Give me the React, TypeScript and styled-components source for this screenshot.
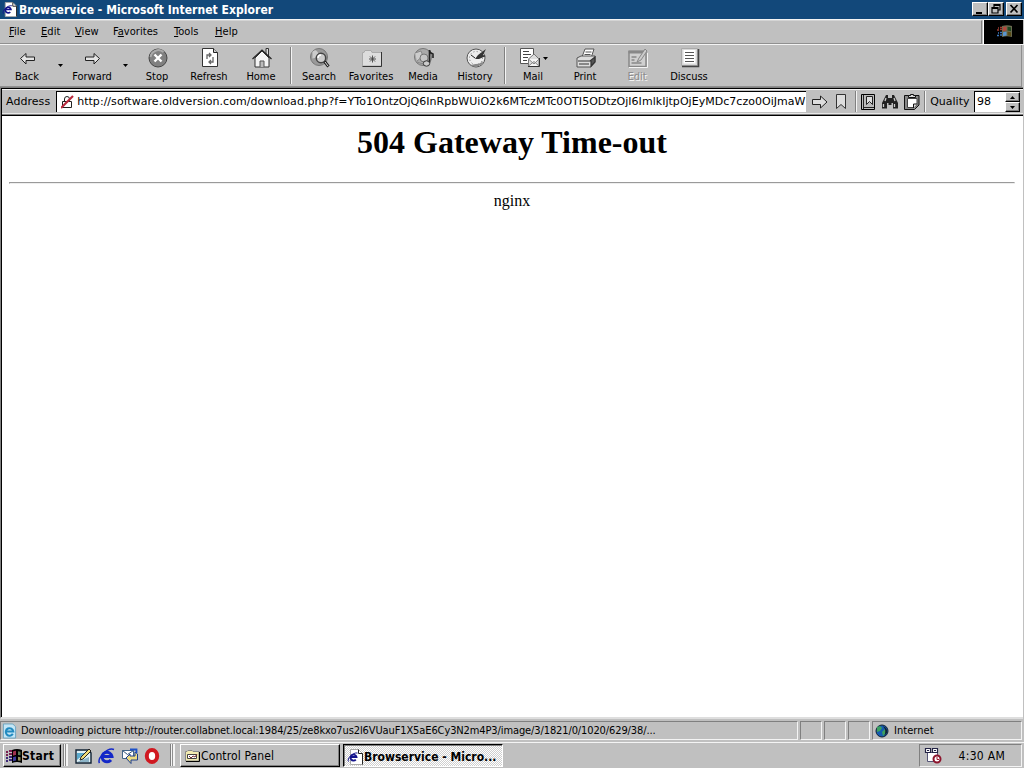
import React from 'react';
import styled, { createGlobalStyle, css } from 'styled-components';

const ui = '"DejaVu Sans Condensed", "DejaVu Sans", sans-serif';

const GlobalStyle = createGlobalStyle`
  * {
    box-sizing: border-box;
  }

  body {
    margin: 0;
    background: #c0c0c0;
    overflow: hidden;
  }
`;

const raised = css`
  border: 1px solid;
  border-color: #fff #000 #000 #fff;
  box-shadow: inset -1px -1px 0 #808080;
`;

const sunken = css`
  border: 1px solid;
  border-color: #808080 #f4f4f4 #f4f4f4 #808080;
`;

const Desktop = styled.div`
  width: 1024px;
  height: 768px;
  display: flex;
  flex-direction: column;
  background: #c0c0c0;
  color: #000;
  font: 11px/14px ${ui};
  white-space: nowrap;
  overflow: hidden;

  svg {
    display: block;
    flex: none;
  }
`;

const Text = styled.span<{ $spacing?: number }>`
  letter-spacing: ${({ $spacing = 0 }) => $spacing}px;
`;

const TitleBar = styled.div`
  flex: none;
  height: 19px;
  padding: 0 2px 0 2px;
  display: flex;
  align-items: center;
  background: #12487a;
  color: #fff;
  font-size: 12px;
  font-weight: bold;

  ${Text} {
    flex: 1;
    padding-left: 2px;
  }
`;

const CaptionButton = styled.div<{ $gap?: number }>`
  ${raised}
  width: 16px;
  height: 14px;
  margin-left: ${({ $gap = 0 }) => $gap}px;
  margin-bottom: 1px;
  background: #c0c0c0;
`;

const MenuRow = styled.div`
  flex: none;
  height: 26px;
  display: flex;
  border-top: 1px solid #f4f4f4;
  border-bottom: 1px solid #f4f4f4;
`;

const MenuBar = styled.div`
  flex: 1;
  display: flex;
  align-items: center;
  padding: 0 0 1px 9px;
  margin-right: 1px;
  border-right: 1px solid #808080;
  border-bottom: 1px solid #909090;
  border-top: 1px solid #d4d4d4;
`;

const MenuItem = styled.div<{ $width: number }>`
  width: ${({ $width }) => $width}px;
  letter-spacing: 0.05px;

  u {
    text-underline-offset: 1px;
  }
`;

const Throbber = styled.div`
  width: 40px;
  margin: 0 1px 0 0;
  background: #000;
  border-left: 1px solid #fff;
  display: flex;
  align-items: center;
  justify-content: center;
`;

const ToolBar = styled.div`
  flex: none;
  height: 42px;
  margin-right: 2px;
  padding: 0 0 0 1px;
  display: flex;
  border-right: 1px solid #909090;
  border-bottom: 1px solid #909090;
`;

const Tool = styled.div<{ $disabled?: boolean }>`
  width: 52px;
  padding-top: 3px;
  display: flex;
  flex-direction: column;
  align-items: center;
  color: ${({ $disabled }) => ($disabled ? '#8c8c8c' : '#000')};
  text-shadow: ${({ $disabled }) => ($disabled ? '1px 1px 0 #f4f4f4' : 'none')};

  ${Text} {
    margin-top: 2px;
  }
`;

const Arrow = styled.div`
  width: 13px;
  padding: 19px 0 0 5px;
`;

const MailIcons = styled.div`
  display: flex;
  gap: 3px;
  align-items: center;
  width: 28px;
`;

const ToolSeparator = styled.div`
  width: 2px;
  margin: 2px 1px 2px 3px;
  border-left: 1px solid #808080;
  border-right: 1px solid #f4f4f4;
`;

const Page = styled.div`
  flex: none;
  height: 632px;
  margin: 0 1px 0 0;
  border-left: 1px solid #808080;
  border-top: 1px solid #808080;
  border-bottom: 2px solid #dedede;
  display: flex;
  flex-direction: column;
  background: #fff;
`;

const AddressBar = styled.div`
  height: 28px;
  display: flex;
  align-items: center;
  padding: 0 3px 1px 4px;
  background: #c0c0c0;
  border: 1px solid #000;
  border-right-width: 0;
  box-shadow: inset 0 -2px 0 -1px #808080, inset 0 1px 0 #f4f4f4, inset 0 -2px 0 #e8e8e8;
  font-family: "DejaVu Sans", sans-serif;
`;

const UrlField = styled.div`
  width: 750px;
  height: 21px;
  margin-left: 6px;
  padding-left: 4px;
  display: flex;
  align-items: center;
  background: #fff;
  border-left: 1px solid #000;
  border-top: 1px solid #000;
  overflow: hidden;

  ${Text} {
    padding-left: 2px;
  }
`;

const BarIcons = styled.div`
  flex: 1;
  display: flex;
  align-items: center;
  padding-left: 6px;
`;

const BarSeparator = styled.div<{ $left: number; $right: number }>`
  width: 2px;
  height: 21px;
  margin: 0 ${({ $right }) => $right}px 0 ${({ $left }) => $left}px;
  border-left: 1px solid #808080;
  border-right: 1px solid #f4f4f4;
`;

const Quality = styled.div`
  width: 46px;
  height: 21px;
  display: flex;
  align-items: center;
  background: #fff;
  border-left: 1px solid #000;
  border-top: 1px solid #000;
  padding-left: 2px;
`;

const Spinner = styled.div`
  width: 15px;
  height: 20px;
  margin-left: auto;
  display: flex;
  flex-direction: column;
`;

const SpinButton = styled.div`
  flex: 1;
  ${raised}
  background: #c0c0c0;
  display: flex;
  align-items: center;
  justify-content: center;
`;

const Document = styled.div`
  flex: 1;
  padding: 8px 8px 8px 7px;
  border-left: 1px solid #000;
  color: #000;
  font-family: "Liberation Serif", serif;
  font-size: 16px;
  line-height: 18px;
  text-align: center;

  h1 {
    margin: 0 0 21px;
    font-size: 32px;
    line-height: 37px;
  }

  hr {
    margin: 0 0 8px;
  }
`;

const StatusBar = styled.div`
  flex: none;
  height: 23px;
  padding: 2px 2px 2px 0;
  display: flex;
  gap: 2px;
`;

const StatusPane = styled.div<{ $width?: number }>`
  ${sunken}
  ${({ $width }) => ($width ? `width: ${$width}px` : 'flex: 1')};
  display: flex;
  align-items: center;
  padding-top: 1px;

  svg {
    margin: 0 4px 0 1px;
  }
`;

const TaskBar = styled.div`
  flex: 1;
  padding: 1px 2px 0 3px;
  display: flex;
  border-top: 1px solid #f4f4f4;
`;

const StartButton = styled.div`
  ${raised}
  width: 58px;
  height: 23px;
  padding-left: 2px;
  display: flex;
  align-items: center;
  font-weight: bold;
  font-size: 12px;
`;

const Grip = styled.div<{ $left: number; $right: number }>`
  width: 5px;
  height: 22px;
  margin: 0 ${({ $right }) => $right}px 0 ${({ $left }) => $left}px;
  border-left: 1px solid #808080;
  border-right: 2px solid #f4f4f4;
  box-shadow: inset 1px 0 0 #f4f4f4, inset -1px 0 0 #909090;
`;

const QuickLaunch = styled.div`
  width: 85px;
  display: flex;
  align-items: center;
  justify-content: space-between;
`;

const TaskButton = styled.div<{ $active?: boolean }>`
  ${raised}
  width: 160px;
  height: 23px;
  padding-left: 3px;
  margin-right: 3px;
  display: flex;
  align-items: center;
  font-size: 12px;

  ${Text} {
    padding-left: 1px;
  }

  ${({ $active }) => $active && css`
    border-color: #000 #fff #fff #000;
    box-shadow: inset 1px 1px 0 #808080;
    background: repeating-conic-gradient(#fff 0 25%, #cfcfcf 0 50%) 0 0 / 2px 2px;
    font-weight: bold;
    padding-top: 2px;
  `}
`;

const Tray = styled.div`
  ${sunken}
  width: 103px;
  height: 23px;
  margin-left: auto;
  padding: 0 16px 0 4px;
  display: flex;
  align-items: center;
  justify-content: space-between;
  font-size: 12px;
`;

const ArrowDown = () => (
  <svg width="5" height="3" viewBox="0 0 5 3"><path d="M0 0h5L2.5 3z" /></svg>
);

const ExplorerPage = ({ size = 16 }: { size?: number }) => (
  <svg width={size} height={size} viewBox="0 0 16 16">
    <path d="M3.5.5h8l4 4v11h-12z" fill="#fff" stroke="#aaa" />
    <path d="M11.5.5v4h4v11" fill="none" stroke="#222" />
    <path d="M8.8 10.600a3 3 0 1 1 .7-2.600H4" fill="none" stroke="#14148c" strokeWidth="1.800" />
    <path d="M1.500 12.500C-.5 10 6 3 10.500 4" fill="none" stroke="#14148c" />
  </svg>
);

const Flag = ({ width = 16 }: { width?: number }) => (
  <svg width={width} height="16" viewBox="0 0 16 16">
    <path d="M6 2q5-2 10 0v13q-5-2-10 0z" fill="#000" />
    <path d="M7 3.500q2-.9 3-.8v4.400q-1.500-.1-3 .7z" fill="#a03250" />
    <path d="M12 3.200q1 0 2.500.5v3.600q-1-.4-2.500-.4z" fill="#5a7d5a" />
    <path d="M7 9.200q2-.9 3-.8v4.200q-1.500 0-3 .7z" fill="#3c3ca0" />
    <path d="M12 8.700q1 0 2.500.5v3.600q-1-.4-2.500-.4z" fill="#96915a" />
    <path d="M0 4h2m1-1h3M0 7h2m1-1h3" stroke="#7a2050" strokeWidth="1.900" />
    <path d="M0 10h2m1-1h3M0 13h2m1-1h3" stroke="#3c2878" strokeWidth="1.900" />
  </svg>
);

// the dimmed flag in the corner of the menu row
const ThrobberFlag = () => (
  <svg width="18" height="16" viewBox="0 0 18 16">
    <path d="M7 2q5-1.500 10 0v11q-5-1.500-10 0z" fill="#6a6a50" />
    <path d="M8 3.200q2-.7 3.500-.6v3.900q-1.700 0-3.500.7z" fill="#b4463c" />
    <path d="M12.500 2.700q2 0 3.500.6v3.900q-1.700-.6-3.500-.6z" fill="#1e4620" />
    <path d="M8 8.300q2-.7 3.500-.6v3.900q-1.700 0-3.500.7z" fill="#5a96d2" />
    <path d="M12.500 7.700q2 0 3.500.6v3.900q-1.700-.6-3.500-.6z" fill="#5a4b14" />
    <path d="M3 4h1m1-.5h2M2 6h2m1-.5h2" stroke="#a03c32" strokeWidth="1.700" />
    <path d="M3 9h1m1-.5h2M2 11.500h2m1-.5h2" stroke="#3c78be" strokeWidth="1.700" />
  </svg>
);

const toolIcons: Record<string, React.ReactNode> = {
  Back: <path d="M3.5 10.500l5.500-5v3.500h8.500v3.500H9v3.500z" fill="#e4e4e4" stroke="#222" />,
  Forward: <path d="M17.500 10.500l-5.500-5v3.500H3.500v3.500H12v3.500z" fill="#e4e4e4" stroke="#222" />,
  Stop: <>
    <circle cx="11" cy="10" r="9" fill="#808080" stroke="#444" />
    <path d="M3.500 9a8 8 0 0 1 13-5" stroke="#aaa" strokeWidth="2" fill="none" />
    <path d="M7.500 6.500l7 7m0-7l-7 7" stroke="#fff" strokeWidth="2.400" />
  </>,
  Refresh: <>
    <path d="M3.500.500h11l4 4v14h-15z" fill="#fff" stroke="#333" />
    <path d="M14.500.500v4h4" fill="#ccc" stroke="#222" />
    <path d="M8 11V7h4m-2-2l2 2-2 2M14 9v5h-4m2-2l-2 2 2 2" fill="none" stroke="#666" strokeWidth="1.300" />
  </>,
  Home: <>
    <path d="M15 7V.500h2.500V9" fill="#ddd" stroke="#333" />
    <path d="M4 10v9h14v-9l-7-7z" fill="#f4f4f4" stroke="#333" />
    <path d="M1.500 11L11 2l9.500 9" fill="none" stroke="#222" strokeWidth="1.200" />
    <path d="M9 19v-6h4v6" fill="#bbb" stroke="#555" />
  </>,
  Search: <>
    <circle cx="10" cy="9" r="8.500" fill="#999" stroke="#777" />
    <path d="M3.500 4q4-3 5 1t-5 5m8 4q1-3 5-5" fill="#ccc" stroke="#ccc" />
    <circle cx="12" cy="10" r="4.700" fill="#ccc" stroke="#444" strokeWidth="1.500" />
    <path d="M9 10a3 3 0 0 1 3-3" fill="none" stroke="#fff" strokeWidth="1.500" />
    <path d="M15.500 13.500l4 5" stroke="#222" strokeWidth="3" />
    <path d="M16 14l3 4" stroke="#ddd" />
  </>,
  Favorites: <>
    <path d="M1.500 18V4.500H3l1-2h6l1 2h9.500V18z" fill="#ddd" stroke="#aaa" />
    <path d="M1.500 18.500h19V4" fill="none" stroke="#333" />
    <path d="M11.500 7.500v7M8 11h7m-6-2.500l5 5m0-5l-5 5" stroke="#444" strokeWidth=".9" />
  </>,
  Media: <>
    <circle cx="10" cy="9" r="8.500" fill="#aaa" stroke="#777" />
    <path d="M2 5l6-2 2 5-6 5M4 14l6 2" fill="#ccc" stroke="#888" />
    <circle cx="11" cy="10" r="4" fill="#c6c6c6" stroke="#777" />
    <path d="M16.500 15V2q0 3 3.500 4v4" fill="none" stroke="#222" strokeWidth="1.600" />
    <ellipse cx="13.500" cy="15.500" rx="3.200" ry="2.700" fill="#ccc" stroke="#333" />
  </>,
  History: <>
    <circle cx="11" cy="10" r="9" fill="#eee" stroke="#555" />
    <circle cx="11" cy="10" r="6.500" fill="none" stroke="#777" strokeDasharray="1 2.400" />
    <path d="M5 17q6 4 12-1l2-4q-3 4-8 4" fill="#888" />
    <path d="M10 11l3-4 8-6-3 6 3 1-7 3z" fill="#333" />
    <path d="M10 10L6 7" stroke="#222" />
  </>,
  Mail: <>
    <path d="M1.500.500h13v15h-13z" fill="#fff" stroke="#555" />
    <path d="M4 3.500h6M4 6.500h8M4 9.500h5M4 12.500h4" stroke="#444" />
    <path d="M9.500 11l5.500-5 5 5v7H9.500z" fill="#ddd" stroke="#777" />
    <path d="M9.500 18l5.500-4.500 5 4.500m-10.500-7l5.500 5 5-5" fill="#f5f5f5" stroke="#888" />
    <path d="M9 18.500h11.500V10" fill="none" stroke="#333" />
  </>,
  Print: <>
    <path d="M7 9l3-8h9l-3 9" fill="#fff" stroke="#555" />
    <path d="M10.500 4h6m-7 2.500h6" stroke="#555" />
    <path d="M2 10l4-2h14v6l-4 5H2z" fill="#ddd" stroke="#555" />
    <path d="M3 13h12l5-4v5l-4 4V13M4 16h10" fill="#555" stroke="#333" strokeWidth="1.200" />
  </>,
  Edit: <>
    <path d="M2 3.500h17v15H2z" fill="#d0d0d0" stroke="#888" strokeWidth="1.500" />
    <path d="M1.500 4h17.500" stroke="#888" strokeWidth="3" />
    <path d="M4.500 9h5m-5 3h3m-3 3h10" stroke="#888" strokeWidth="1.400" />
    <path d="M10 14l2-4 6-9 2 2-6 9z" fill="#ccc" stroke="#888" />
    <path d="M20.500 5v14.500H2" fill="none" stroke="#f4f4f4" />
  </>,
  Discuss: <>
    <path d="M2.500.500h16v17h-16z" fill="#d8d8d8" stroke="#aaa" />
    <path d="M4.500 2h12v13.500h-12z" fill="#fff" />
    <path d="M19.500 1v17.500H3" fill="none" stroke="#444" strokeWidth="1.600" />
    <path d="M6 4.500h9M6 7.500h9M6 10.500h9M6 13.500h9" stroke="#555" />
  </>
};

type ToolButtonProps = {
  name: string;
};

const ToolButton = ({ name }: ToolButtonProps) => {
  const icon = (
    <svg width="21" height="20" viewBox="0 0 21 20">{toolIcons[name]}</svg>
  );

  return (
    <Tool $disabled={name === 'Edit'}>
      {name === 'Mail' ? <MailIcons>{icon}<ArrowDown /></MailIcons> : icon}
      <Text>{name}</Text>
    </Tool>
  );
};

const url = 'http://software.oldversion.com/download.php?f=YTo1OntzOjQ6InRpbWUiO2k6MTczMTc0OTI5ODtzOjI6ImlkIjtpOjEyMDc7czo0OiJmaW';

const menus: [string, string, string, number][] = [
  ['', 'F', 'ile', 32],
  ['', 'E', 'dit', 34],
  ['', 'V', 'iew', 38],
  ['F', 'a', 'vorites', 61],
  ['', 'T', 'ools', 41],
  ['', 'H', 'elp', 40]
];

const App = () => (
  <Desktop>
    <GlobalStyle />
    <TitleBar>
      <ExplorerPage size={15} />
      <Text $spacing={0.05}>Browservice - Microsoft Internet Explorer</Text>
      <CaptionButton><svg width="14" height="12"><path d="M3 9h6v2H3z" /></svg></CaptionButton>
      <CaptionButton>
        <svg width="14" height="12">
          <path d="M5 4V1.500h6V7H9M5 2.500h6M3 4.500h6V10H3zm0 1h6" fill="none" stroke="#000" strokeWidth="1.200" />
        </svg>
      </CaptionButton>
      <CaptionButton $gap={2}>
        <svg width="14" height="12"><path d="M3.500 2l7 7.500m0-7.500l-7 7.500" stroke="#000" strokeWidth="1.700" /></svg>
      </CaptionButton>
    </TitleBar>
    <MenuRow>
      <MenuBar>
        {menus.map(([before, key, after, width]) => (
          <MenuItem $width={width} key={key}>{before}<u>{key}</u>{after}</MenuItem>
        ))}
      </MenuBar>
      <Throbber><ThrobberFlag /></Throbber>
    </MenuRow>
    <ToolBar>
      <ToolButton name="Back" />
      <Arrow><ArrowDown /></Arrow>
      <ToolButton name="Forward" />
      <Arrow><ArrowDown /></Arrow>
      {['Stop', 'Refresh', 'Home'].map((name) => <ToolButton key={name} name={name} />)}
      <ToolSeparator />
      {['Search', 'Favorites', 'Media', 'History'].map((name) => <ToolButton key={name} name={name} />)}
      <ToolSeparator />
      {['Mail', 'Print', 'Edit', 'Discuss'].map((name) => <ToolButton key={name} name={name} />)}
    </ToolBar>
    <Page>
      <AddressBar>
        <Text $spacing={0.05}>Address</Text>
        <UrlField>
          <svg width="14" height="14" viewBox="0 0 14 14">
            <path d="M1.500 6.500h9v6h-9zM3.500 6V4a2.500 2.500 0 0 1 5 0v2" fill="none" stroke="#222" />
            <path d="M0 13L12 1" stroke="#b8283c" strokeWidth="2.200" />
          </svg>
          <Text $spacing={0.035}>{url}</Text>
        </UrlField>
        <BarIcons>
          <svg width="16" height="16" viewBox="0 0 16 16">
            <path d="M.5 5.500h8v-3.500l6.500 6-6.500 6v-3.500h-8z" fill="#ddd" stroke="#222" />
          </svg>
          <svg width="27" height="16" viewBox="0 0 27 16">
            <path d="M8.500.5h9v14l-4.500-4-4.500 4z" fill="#ddd" stroke="#333" />
          </svg>
          <BarSeparator $left={0} $right={4} />
          <svg width="14" height="16" viewBox="0 0 14 16">
            <path d="M.5.5h13v15H.5z" fill="#bbb" stroke="#000" />
            <path d="M2.500 1v14M5.500 2.500h6v8l-3-3-3 3zM3 13.500h10" fill="#ddd" stroke="#222" />
          </svg>
          <svg width="29" height="16" viewBox="0 0 29 16">
            <path d="M9 5l2-4h2v3h4V1h2l2 4 2 4v5.500h-5V9h-1.500v2h-3V9H12v5.500H7V9z" fill="#222" />
            <path d="M8.500 10v3m11-3v3M11 4l-1 3m9-3l1 3" stroke="#ccc" strokeWidth="1.300" />
          </svg>
          <svg width="16" height="16" viewBox="0 0 16 16">
            <path d="M.5 1.500h14.500v9.500l-4.500 4.500H.5z" fill="#888" stroke="#111" />
            <path d="M3.500 4.500H13v6l-3 3H3.500z" fill="#fff" stroke="#444" />
            <path d="M4.500 3.500v-2h2v-1h3v1h2v2zM9.500 14v-4H13" fill="#ddd" stroke="#111" />
          </svg>
          <BarSeparator $left={4} $right={4} />
          <Text>Quality</Text>
        </BarIcons>
        <Quality>
          <Text>98</Text>
          <Spinner>
            <SpinButton><svg width="5" height="3"><path d="M0 3h5L2.500 0z" /></svg></SpinButton>
            <SpinButton><ArrowDown /></SpinButton>
          </Spinner>
        </Quality>
      </AddressBar>
      <Document>
        <h1>504 Gateway Time-out</h1>
        <hr />
        nginx
      </Document>
    </Page>
    <StatusBar>
      <StatusPane>
        <svg width="15" height="16" viewBox="0 0 16 16">
          <path d="M1.500.5h10l3 3v12h-13z" fill="#c4e6f6" stroke="#6aa3c0" />
          <path d="M11.500 11a4 4 0 1 1 .5-2.500H5" fill="none" stroke="#218ac0" strokeWidth="2.200" />
        </svg>
        <Text $spacing={-0.11}>Downloading picture http://router.collabnet.local:1984/25/ze8kxo7us2l6VUauF1X5aE6Cy3N2m4P3/image/3/1821/0/1020/629/38/...</Text>
      </StatusPane>
      <StatusPane $width={22} />
      <StatusPane $width={22} />
      <StatusPane $width={22} />
      <StatusPane $width={150}>
        <svg width="16" height="16" viewBox="0 0 16 16">
          <circle cx="8" cy="8" r="6" fill="#155bb0" stroke="#123" />
          <path d="M3 4q4-2 5 1L6 8 3 9zM8 9l4-4v5l-3 3z" fill="#3aa060" />
          <path d="M9 3q5 2 4 7l-3 3q3-5-1-10" fill="#123" />
        </svg>
        <Text $spacing={0.05}>Internet</Text>
      </StatusPane>
    </StatusBar>
    <TaskBar>
      <StartButton><Flag /><Text $spacing={0.3}>Start</Text></StartButton>
      <Grip $left={2} $right={7} />
      <QuickLaunch>
        <svg width="17" height="16" viewBox="0 0 17 16">
          <path d="M1 2h13l2 3v10H1z" fill="#e0f0f6" stroke="#123" strokeWidth="1.400" />
          <path d="M2 12V5h8z" fill="#5aaacd" />
          <path d="M2 14h12V9z" fill="#8cb4c8" />
          <path d="M5 12l1-3 8-8 2 2-8 8z" fill="#f0dc78" stroke="#222" />
        </svg>
        <svg width="17" height="16" viewBox="0 0 17 16">
          <path d="M13 12a5 4.800 0 1 1 1-3.500H5" fill="none" stroke="#1428c8" strokeWidth="3" />
          <path d="M1.500 15C-1 11 9-1 16 1.500" fill="none" stroke="#1428c8" strokeWidth="1.500" />
        </svg>
        <svg width="16" height="16" viewBox="0 0 16 16">
          <path d="M.5 2.500h11v8H.5z" fill="#fff" stroke="#468" />
          <path d="M.5 2.500l5 4 6-4" fill="none" stroke="#357" />
          <path d="M4 10l4-4v2h5V4l2.500 2v6H9v3.500z" fill="#eedc82" stroke="#1d3f8c" />
          <path d="M8 1.500h6.500V5" fill="none" stroke="#1d50c8" strokeWidth="1.800" />
        </svg>
        <svg width="16" height="16" viewBox="0 0 16 16">
          <ellipse cx="8" cy="8" rx="5.200" ry="6" fill="#fff" stroke="#d01820" strokeWidth="4" />
        </svg>
      </QuickLaunch>
      <Grip $left={10} $right={5} />
      <TaskButton>
        <svg width="16" height="16" viewBox="0 0 16 16">
          <path d="M1.500 13V3.500H3l1-1h4l1 1h6V13z" fill="#f4ecb0" stroke="#888" />
          <path d="M2 13.500h13.500V4" fill="none" stroke="#000" />
          <path d="M3.500 6.500h9v4h-9z" fill="#fff" stroke="#444" />
          <path d="M5 8l2 2 2-2 2 1 2-3" fill="none" stroke="#733" />
        </svg>
        <Text $spacing={0.12}>Control Panel</Text>
      </TaskButton>
      <TaskButton $active>
        <ExplorerPage />
        <Text>Browservice - Micro...</Text>
      </TaskButton>
      <Tray>
        <svg width="18" height="17" viewBox="0 0 18 17">
          <path d="M3.500 5.500h10v9h-10z" fill="#fff" stroke="#557" />
          <path d="M1.500 1.500h5v4h-5zm7 0h5v4h-5z" fill="#fff" stroke="#224" strokeWidth="1.200" />
          <path d="M3 3.500h2m5 0h2" stroke="#224" />
          <circle cx="13" cy="12" r="3.500" fill="#fff" stroke="#8c142c" strokeWidth="2" />
          <path d="M13 10v2.500h2" fill="none" stroke="#a0182c" />
        </svg>
        <Text $spacing={0.3}>4:30 AM</Text>
      </Tray>
    </TaskBar>
  </Desktop>
);

export default App;
